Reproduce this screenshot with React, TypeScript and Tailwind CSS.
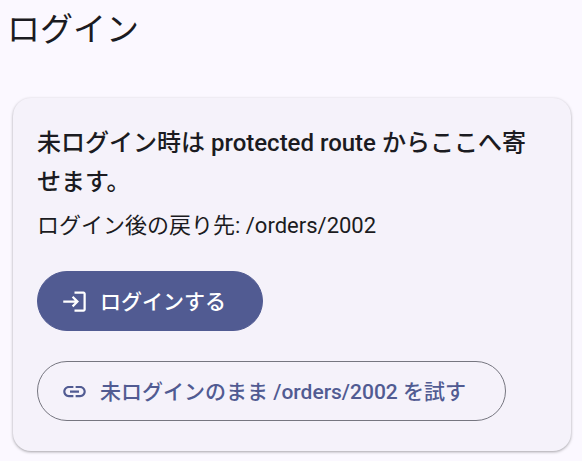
import React from 'react'

const redirectTo = '/orders/2002'

function LoginIcon() {
  return (
    <svg viewBox="0 0 24 24" className="size-[27px] shrink-0" fill="currentColor" aria-hidden="true">
      <path d="M11 7L9.6 8.4l2.6 2.6H2v2h10.2l-2.6 2.6L11 17l5-5-5-5zm9 12h-8v2h8c1.1 0 2-.9 2-2V5c0-1.1-.9-2-2-2h-8v2h8v14z" />
    </svg>
  )
}

function LinkIcon() {
  return (
    <svg viewBox="0 0 24 24" className="size-[27px] shrink-0" fill="currentColor" aria-hidden="true">
      <path d="M3.9 12c0-1.71 1.39-3.1 3.1-3.1h4V7H7c-2.76 0-5 2.24-5 5s2.24 5 5 5h4v-1.9H7c-1.71 0-3.1-1.39-3.1-3.1zM8 13h8v-2H8v2zm9-6h-4v1.9h4c1.71 0 3.1 1.39 3.1 3.1s-1.39 3.1-3.1 3.1h-4V17h4c2.76 0 5-2.24 5-5s-2.24-5-5-5z" />
    </svg>
  )
}

export default function App() {
  return (
    <div className="min-h-screen bg-[#fbf8ff] pb-2 font-[Roboto,'Noto_Sans_CJK_JP',sans-serif] text-[#1b1b21]">
      <header className="px-[7px] pt-2">
        <h1 className="text-[33px] leading-[44px]">ログイン</h1>
      </header>

      <main className="pt-[46px] pr-[11px] pl-[13px]">
        <section className="rounded-[18px] bg-[#f5f2fa] px-6 pt-[26px] pb-[30px] shadow-[0_1px_3px_rgba(0,0,0,0.35)]">
          <h2 className="text-2xl leading-[39px] font-medium">
            未ログイン時は protected route からここへ寄せます。
          </h2>
          <p className="mt-2 text-[22px] leading-[32px]">ログイン後の戻り先: {redirectTo}</p>

          <div className="mt-[29px] flex flex-col items-start gap-[30px]">
            <button
              type="button"
              className="flex h-[60px] items-center gap-3 rounded-full border border-[#515b92] bg-[#515b92] pr-9 pl-[23px] text-[21px] font-medium text-white"
            >
              <LoginIcon />
              <span className="pt-[3px]">ログインする</span>
            </button>
            <button
              type="button"
              className="flex h-[60px] items-center gap-3 rounded-full border border-[#767680] pr-[39px] pl-[23px] text-[21px] font-medium text-[#515b92]"
            >
              <LinkIcon />
              <span className="pt-[3px]">未ログインのまま {redirectTo} を試す</span>
            </button>
          </div>
        </section>
      </main>
    </div>
  )
}
